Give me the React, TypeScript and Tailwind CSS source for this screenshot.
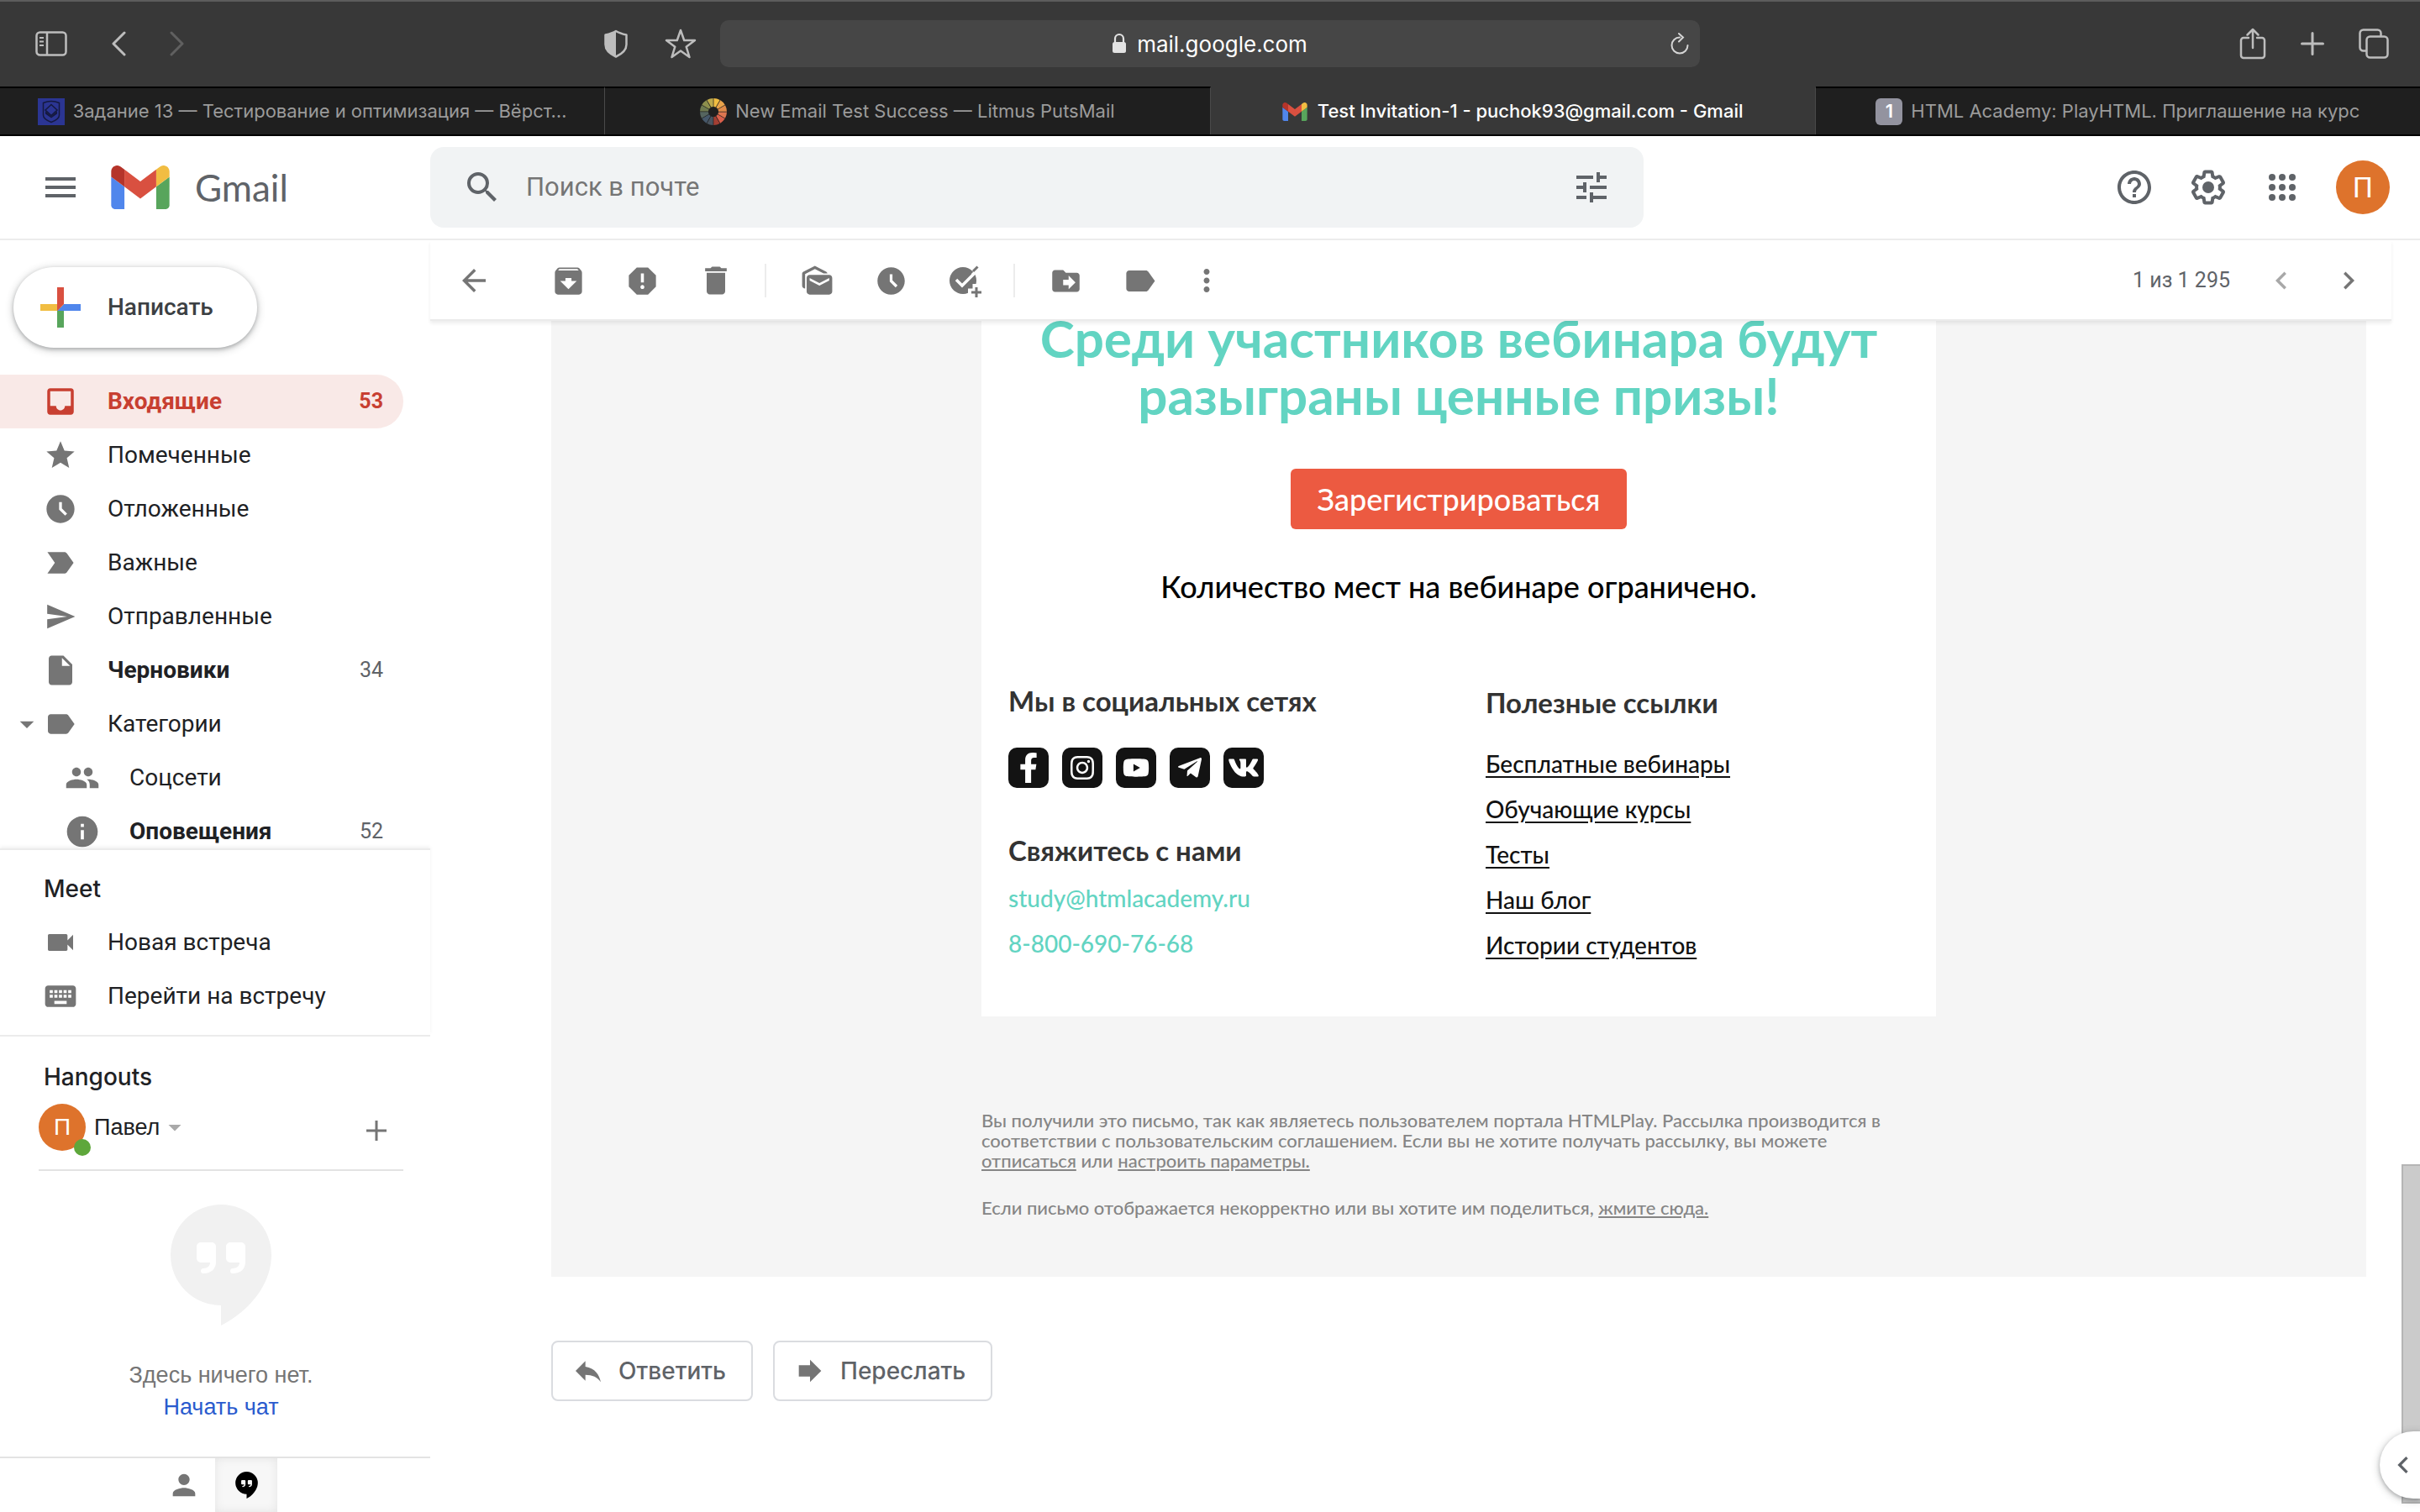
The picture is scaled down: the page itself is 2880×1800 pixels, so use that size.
import type { ReactNode } from "react";
import type { IconType } from "react-icons";
import {
  MdAccessTimeFilled,
  MdArchive,
  MdArrowBack,
  MdArrowDropDown,
  MdChevronLeft,
  MdChevronRight,
  MdDelete,
  MdDriveFileMove,
  MdForward,
  MdHelpOutline,
  MdInbox,
  MdInfo,
  MdInsertDriveFile,
  MdKeyboard,
  MdLabel,
  MdLabelImportant,
  MdMarkAsUnread,
  MdMenu,
  MdMoreVert,
  MdPeople,
  MdPerson,
  MdReply,
  MdReport,
  MdSearch,
  MdSend,
  MdStar,
  MdTune,
  MdVideocam,
} from "react-icons/md";
import { FaFacebookF, FaInstagram, FaTelegramPlane, FaVk, FaYoutube } from "react-icons/fa";

function GmailLogo({ className }: { className: string }) {
  return (
    <svg viewBox="52 42 88 66" className={className} aria-hidden="true">
      <path fill="#5086ec" d="M58 108h14V74L52 59v43c0 3.32 2.69 6 6 6" />
      <path fill="#58a55c" d="M120 108h14c3.32 0 6-2.69 6-6V59l-20 15" />
      <path fill="#f1bd42" d="M120 48v26l20-15v-8c0-7.42-8.47-11.65-14.4-7.2" />
      <path fill="#d95040" d="M72 74V48l24 18 24-18v26L96 92" />
      <path fill="#b5342a" d="M52 51v8l20 15V48l-5.6-4.2c-5.94-4.45-14.4-.22-14.4 7.2" />
    </svg>
  );
}

function AcademyIcon() {
  return (
    <svg viewBox="0 0 32 32" className="size-8 shrink-0" aria-hidden="true">
      <rect width="32" height="32" fill="#2b3593" />
      <path d="M6.500 5.500Q16 1.500 25.500 5.500V20q0 5-9.500 8.500Q6.500 25 6.500 20z" fill="none" stroke="#15193f" strokeWidth="1.500" />
      <path d="M16 7.500l7 6.500-7 6.500-7-6.500z" fill="none" stroke="#15193f" strokeWidth="1.500" />
      <path d="M9 15l7 6.500 7-6.500v3.500l-7 5-7-5z" fill="#15193f" />
    </svg>
  );
}

const wheelColors = ["#f1bd42", "#e9a34b", "#e08b4a", "#dd7650", "#d95f4b", "#a33f33", "#4a5560", "#46586a", "#55655f", "#6f7a50", "#8d8f4d", "#bda94c"];

function WheelIcon() {
  return (
    <svg viewBox="-16 -16 32 32" className="size-8 shrink-0" aria-hidden="true">
      {wheelColors.map((color, i) => (
        <path key={color} d="M0.400 -6V-16A16 16 0 0 1 7.700 -14L2.800 -5.400A6 6 0 0 0 0.400 -6z" fill={color} transform={`rotate(${i * 30})`} />
      ))}
    </svg>
  );
}

function HangoutsBubble({ className }: { className: string }) {
  return (
    <svg viewBox="0 0 120 144" className={className} aria-hidden="true">
      <path
        fillRule="evenodd"
        fill="currentColor"
        d="M60 0a60 60 0 0 1 60 60c0 36-28 68-60 84v-24A60 60 0 0 1 60 0zM36 45a5 5 0 0 0-5 5v14a5 5 0 0 0 5 5h11c0 4-3 7-8 7-2 0-3 1-3 3s1 3 3 3c9 0 15-5 15-14V50a5 5 0 0 0-5-5zM71 45a5 5 0 0 0-5 5v14a5 5 0 0 0 5 5h11c0 4-3 7-8 7-2 0-3 1-3 3s1 3 3 3c9 0 15-5 15-14V50a5 5 0 0 0-5-5z"
      />
    </svg>
  );
}

function GearIcon() {
  return (
    <svg viewBox="0 0 24 24" className="size-12" fill="currentColor" aria-hidden="true">
      <path d="M13.850 22.250h-3.700c-.74 0-1.360-.54-1.450-1.270l-.27-1.890c-.27-.14-.53-.29-.79-.46l-1.800.72c-.7.26-1.470-.03-1.810-.65L2.200 15.530c-.35-.66-.2-1.440.36-1.880l1.530-1.190c-.01-.15-.02-.3-.02-.46 0-.15.01-.31.02-.46l-1.520-1.190c-.59-.45-.74-1.260-.37-1.880l1.850-3.190c.34-.62 1.110-.9 1.790-.63l1.810.73c.26-.17.52-.32.78-.46l.27-1.910c.09-.7.71-1.250 1.440-1.250h3.700c.74 0 1.360.54 1.450 1.270l.27 1.890c.27.14.53.29.79.46l1.800-.72c.71-.26 1.480.03 1.820.65l1.840 3.180c.36.66.2 1.440-.36 1.880l-1.520 1.190c.01.15.02.3.02.46s-.01.31-.02.46l1.520 1.190c.56.45.72 1.230.37 1.860l-1.860 3.220c-.34.62-1.110.9-1.800.63l-1.800-.72c-.26.17-.52.32-.78.46l-.27 1.910c-.1.68-.72 1.220-1.460 1.220zm-3.230-2h2.760l.37-2.550.53-.22c.44-.18.88-.44 1.340-.78l.45-.34 2.380.96 1.380-2.400-2.030-1.580.07-.56c.03-.26.06-.51.06-.78s-.03-.53-.06-.78l-.07-.56 2.030-1.580-1.390-2.400-2.390.96-.45-.35c-.42-.32-.87-.58-1.330-.77l-.52-.22-.37-2.550h-2.760l-.37 2.550-.53.21c-.44.19-.88.44-1.340.79l-.45.33-2.380-.95-1.390 2.390 2.030 1.580-.07.56a7 7 0 0 0-.06.79c0 .26.02.53.06.78l.07.56-2.030 1.580 1.380 2.400 2.390-.96.45.35c.43.33.86.58 1.330.77l.53.22.38 2.550z" />
      <circle cx="12" cy="12" r="3.500" />
    </svg>
  );
}

function TaskIcon() {
  return (
    <svg viewBox="0 0 40 40" className="size-10" fill="none" aria-hidden="true">
      <circle cx="18" cy="20" r="16" fill="#757575" />
      <path d="M10 19l7 7L38 5" stroke="#fff" strokeWidth="3.500" />
      <path d="M28 12L38 2l2 2-11 11z" fill="#fff" />
      <path d="M24 34h16M34 24v16" stroke="#fff" strokeWidth="9" />
      <path d="M30 9l5.500-5.500" stroke="#757575" strokeWidth="3" />
      <path d="M28 34h12M34 28v12" stroke="#757575" strokeWidth="3" />
    </svg>
  );
}

function SafariTab({ icon, title, active = false }: { icon: ReactNode; title: string; active?: boolean }) {
  return (
    <button
      className={
        active
          ? "flex h-full min-w-0 flex-1 items-center justify-center gap-3 border-t-2 border-r border-t-[#383838] border-r-[#4a4a4a] bg-[#383838] font-medium text-white"
          : "flex h-full min-w-0 flex-1 items-center justify-center gap-2.5 border-t-2 border-r border-t-black border-r-[#4a4a4a] bg-[#1f1f1f] text-[#9b9b9b] last:border-r-0"
      }
    >
      {icon}
      <span className="truncate">{title}</span>
    </button>
  );
}

function SafariChrome() {
  return (
    <div className="shrink-0 font-[Inter,sans-serif] text-[22px] text-[#bdbdbd]">
      <div className="flex h-[103px] items-start justify-between border-t-2 border-[#5c5c5c] bg-[#383838] pt-[22px]">
        <div className="flex h-14 w-[29.75%] items-center pr-7 pl-[42px]">
          <button aria-label="Боковая панель">
            <svg viewBox="0 0 38 32" className="h-8 w-[38px]" fill="none" stroke="currentColor" aria-hidden="true">
              <rect x="1.500" y="2.500" width="35" height="27" rx="4" strokeWidth="2.500" />
              <path d="M14 3v26" strokeWidth="2.500" />
              <path d="M5 9h5M5 13.500h5M5 18h5" strokeWidth="2" />
            </svg>
          </button>
          <button aria-label="Назад" className="ml-[52px]">
            <svg viewBox="0 0 18 30" className="h-[30px] w-[18px]" fill="none" stroke="currentColor" strokeWidth="3" strokeLinecap="round" strokeLinejoin="round" aria-hidden="true">
              <path d="M16 2L3 15l13 13" />
            </svg>
          </button>
          <button aria-label="Вперёд" className="ml-[52px] text-[#606060]">
            <svg viewBox="0 0 18 30" className="h-[30px] w-[18px]" fill="none" stroke="currentColor" strokeWidth="3" strokeLinecap="round" strokeLinejoin="round" aria-hidden="true">
              <path d="M2 2l13 13L2 28" />
            </svg>
          </button>
          <button aria-label="Отчёт о конфиденциальности" className="ml-auto">
            <svg viewBox="0 0 28 34" className="h-[34px] w-7" aria-hidden="true">
              <path d="M14 2C10 4.500 6 5.500 1.500 6.500V18c0 7 6 11.500 12.500 14.500C20.500 29.500 26.500 25 26.500 18V6.500C22 5.500 18 4.500 14 2z" fill="none" stroke="currentColor" strokeWidth="2.500" strokeLinejoin="round" />
              <path d="M14 2C10 4.500 6 5.500 1.500 6.500V18c0 7 6 11.500 12.500 14.500z" fill="currentColor" />
            </svg>
          </button>
          <button aria-label="Добавить в избранное" className="ml-11">
            <svg viewBox="0 0 38 36" className="h-9 w-[38px]" fill="none" stroke="currentColor" strokeWidth="2.500" strokeLinejoin="round" aria-hidden="true">
              <path d="M19 2l4.200 12H36L25.700 21.700 29.500 34 19 26.500 8.500 34l3.800-12.300L2 14h12.800z" />
            </svg>
          </button>
        </div>
        <div className="flex h-14 w-[40.5%] items-center rounded-[10px] bg-[#464646] text-white">
          <span className="flex flex-1 items-center justify-center gap-3 pl-[35px] text-[26px]">
            <svg viewBox="0 0 18 26" className="h-[26px] w-[18px] text-[#e3e3e3]" aria-hidden="true">
              <rect x="1" y="11" width="16" height="13" rx="2.500" fill="currentColor" />
              <path d="M4 12V7a5 5 0 0 1 10 0v5" fill="none" stroke="currentColor" strokeWidth="2.200" />
            </svg>
            mail.google.com
          </span>
          <button aria-label="Обновить" className="mr-3">
            <svg viewBox="0 0 24 28" className="h-7 w-6" fill="none" stroke="#d5d5d5" strokeWidth="2" strokeLinecap="round" aria-hidden="true">
              <path d="M12 6.500a9.500 9.500 0 1 0 9.500 9.500" />
              <path d="M11 2l5 4.500-5 5" />
            </svg>
          </button>
        </div>
        <div className="flex h-14 w-[29.75%] items-center justify-end gap-10 pr-[37px]">
          <button aria-label="Поделиться">
            <svg viewBox="0 0 32 38" className="h-[38px] w-8" fill="none" stroke="currentColor" strokeWidth="2.500" strokeLinecap="round" strokeLinejoin="round" aria-hidden="true">
              <path d="M11 12H5a3 3 0 0 0-3 3v18a3 3 0 0 0 3 3h22a3 3 0 0 0 3-3V15a3 3 0 0 0-3-3h-6M16 24V2M9.500 8.500L16 2l6.500 6.500" />
            </svg>
          </button>
          <button aria-label="Новая вкладка">
            <svg viewBox="0 0 30 30" className="size-[30px]" stroke="currentColor" strokeWidth="3" strokeLinecap="round" aria-hidden="true">
              <path d="M15 2.500v25M2.500 15h25" />
            </svg>
          </button>
          <button aria-label="Обзор вкладок">
            <svg viewBox="0 0 36 36" className="size-9" fill="none" stroke="currentColor" strokeWidth="2.500" strokeLinejoin="round" aria-hidden="true">
              <rect x="9.500" y="9.500" width="25" height="25" rx="4" />
              <path d="M9 26.500H5.500a4 4 0 0 1-4-4v-17a4 4 0 0 1 4-4h17a4 4 0 0 1 4 4V9" />
            </svg>
          </button>
        </div>
      </div>
      <div className="flex h-[59px] border-b-2 border-black bg-[#383838]">
        <SafariTab icon={<AcademyIcon />} title="Задание 13 — Тестирование и оптимизация — Вёрст…" />
        <SafariTab icon={<WheelIcon />} title="New Email Test Success — Litmus PutsMail" />
        <SafariTab active icon={<GmailLogo className="h-[22px] w-[30px] shrink-0" />} title="Test Invitation-1 - puchok93@gmail.com - Gmail" />
        <SafariTab
          icon={<span className="flex size-8 shrink-0 items-center justify-center rounded-md bg-[#93939f] font-semibold text-white">1</span>}
          title="HTML Academy: PlayHTML. Приглашение на курс"
        />
      </div>
    </div>
  );
}

function GmailHeader() {
  return (
    <header className="flex h-[124px] shrink-0 items-center border-b-2 border-[#ececec] text-[#5f6368]">
      <div className="flex w-[512px] shrink-0 items-center pl-12">
        <button aria-label="Главное меню">
          <MdMenu className="size-12" />
        </button>
        <a href="#inbox" className="ml-9 flex items-center gap-[30px] font-[Lato,sans-serif] text-[44px] leading-[52px]">
          <GmailLogo className="h-[52px] w-[70px]" />
          Gmail
        </a>
      </div>
      <form className="flex h-24 max-w-[1444px] flex-1 items-center rounded-2xl bg-[#f1f3f4] pr-[38px] pl-[38px]">
        <button type="button" aria-label="Поиск">
          <MdSearch className="size-12" />
        </button>
        <input
          type="text"
          aria-label="Поиск в почте"
          placeholder="Поиск в почте"
          className="ml-7 min-w-0 flex-1 bg-transparent font-[Roboto,sans-serif] text-[31px] leading-10 outline-none placeholder:text-[#757575]"
        />
        <button type="button" aria-label="Параметры поиска">
          <MdTune className="size-12" />
        </button>
      </form>
      <div className="ml-auto flex items-center gap-10 pr-9">
        <button aria-label="Справка">
          <MdHelpOutline className="size-12" />
        </button>
        <button aria-label="Настройки">
          <GearIcon />
        </button>
        <button aria-label="Приложения Google">
          <svg viewBox="0 0 48 48" className="size-12" fill="currentColor" aria-hidden="true">
            {[12, 24, 36].flatMap((y) => [12, 24, 36].map((x) => <circle key={`${x}-${y}`} cx={x} cy={y} r="4" />))}
          </svg>
        </button>
        <button aria-label="Аккаунт" className="flex size-16 items-center justify-center rounded-full bg-[#de732c] font-[Roboto,sans-serif] text-[34px] text-white">
          П
        </button>
      </div>
    </header>
  );
}

type NavItem = { icon: IconType; size: number; label: string; count?: number; state?: "active" | "unread"; nested?: boolean; arrow?: boolean };

const navItems: NavItem[] = [
  { icon: MdInbox, size: 42, label: "Входящие", count: 53, state: "active" },
  { icon: MdStar, size: 40, label: "Помеченные" },
  { icon: MdAccessTimeFilled, size: 40, label: "Отложенные" },
  { icon: MdLabelImportant, size: 44, label: "Важные" },
  { icon: MdSend, size: 38, label: "Отправленные" },
  { icon: MdInsertDriveFile, size: 42, label: "Черновики", count: 34, state: "unread" },
  { icon: MdLabel, size: 40, label: "Категории", arrow: true },
  { icon: MdPeople, size: 42, label: "Соцсети", nested: true },
  { icon: MdInfo, size: 44, label: "Оповещения", count: 52, state: "unread", nested: true },
];

const meetItems: NavItem[] = [
  { icon: MdVideocam, size: 40, label: "Новая встреча" },
  { icon: MdKeyboard, size: 44, label: "Перейти на встречу" },
];

function NavRow({ item }: { item: NavItem }) {
  const Icon = item.icon;
  const active = item.state === "active";
  return (
    <a
      href="#folder"
      className={`relative flex h-16 shrink-0 items-center rounded-r-full pr-6 ${active ? "bg-[#f9e9e7] text-[#c83f31]" : "text-[#202124]"} ${item.nested ? "pl-[74px]" : "pl-12"}`}
    >
      {item.arrow && <MdArrowDropDown className="absolute left-3 size-10 text-[#757575]" />}
      <span className={`flex w-12 justify-center ${active ? "" : "text-[#757575]"}`}>
        <Icon size={item.size} />
      </span>
      <span className={`ml-8 flex-1 ${item.state ? "font-bold" : ""}`}>{item.label}</span>
      {item.count && <span className={`text-[25px] ${active ? "font-bold" : "text-[#5f6368]"}`}>{item.count}</span>}
    </a>
  );
}

function Sidebar() {
  return (
    <aside className="flex w-[512px] shrink-0 flex-col font-[Roboto,sans-serif] text-[28px]">
      <div className="flex min-h-0 flex-1 flex-col overflow-hidden">
        <div className="px-4 py-8">
          <button className="flex h-24 items-center rounded-full bg-white pr-[52px] pl-5 font-medium text-[#3c4043] shadow-[0_2px_4px_rgba(60,64,67,0.3),0_2px_8px_2px_rgba(60,64,67,0.2)]">
            <svg viewBox="0 0 36 36" className="size-[72px]" aria-hidden="true">
              <path fill="#58a55c" d="M16 16v14h4V20z" />
              <path fill="#5086ec" d="M30 16H20l-4 4h14z" />
              <path fill="#f1bd42" d="M6 16v4h10l4-4z" />
              <path fill="#d95040" d="M20 16V6h-4v14z" />
            </svg>
            <span className="ml-5">Написать</span>
          </button>
        </div>
        <nav className="flex flex-col pr-8" aria-label="Папки">
          {navItems.map((item) => (
            <NavRow key={item.label} item={item} />
          ))}
        </nav>
      </div>
      <section className="relative border-t-2 border-[#ececec] bg-white pt-3.5 pb-3.5 shadow-[0_-2px_4px_rgba(0,0,0,0.06)]">
        <h2 className="flex h-16 items-center pl-[52px] font-[Inter,sans-serif] font-medium text-[#202124]">Meet</h2>
        {meetItems.map((item) => (
          <NavRow key={item.label} item={item} />
        ))}
      </section>
      <section className="border-t-2 border-[#ececec] bg-white pt-4 pr-8 pl-[46px] font-['Liberation_Sans',sans-serif] text-[27px]">
        <h2 className="flex h-16 items-center pl-1.5 font-[Inter,sans-serif] text-[28px] font-medium text-[#202124]">Hangouts</h2>
        <div className="flex h-20 items-start border-b-2 border-[#e3e3e3]">
          <div className="relative flex size-14 items-center justify-center rounded-full bg-[#de732c] text-[28px] text-white">
            П
            <span className="absolute -right-1.5 -bottom-1.5 size-5 rounded-full bg-[#5ea73b]" />
          </div>
          <button className="ml-2.5 flex h-14 items-center text-[#202124]">
            Павел
            <MdArrowDropDown className="size-9 text-[#a9a9a9]" />
          </button>
          <button aria-label="Новая беседа" className="mt-5 mr-5 ml-auto">
            <svg viewBox="0 0 24 24" className="size-6" stroke="#757575" strokeWidth="3" aria-hidden="true">
              <path d="M12 0v24M0 12h24" />
            </svg>
          </button>
        </div>
        <div className="flex flex-col items-center pt-10 pb-10 leading-[38px]">
          <HangoutsBubble className="mb-10 h-36 w-[120px] text-[#f1f1f1]" />
          <p className="text-[#757575]">Здесь ничего нет.</p>
          <a href="#chat" className="text-[#2a5bce]">
            Начать чат
          </a>
        </div>
      </section>
      <div className="flex h-[66px] justify-center border-t-2 border-[#e3e3e3] bg-white">
        <button aria-label="Контакты" className="flex w-[74px] items-center justify-center text-[#757575]">
          <MdPerson className="size-10" />
        </button>
        <button aria-label="Беседы Hangouts" className="flex w-[74px] items-center justify-center bg-[#f7f7f7] shadow-[inset_0_0_12px_rgba(0,0,0,0.08)]">
          <HangoutsBubble className="h-8 w-[27px] text-black" />
        </button>
      </div>
    </aside>
  );
}

function ToolButton({ label, className = "", children }: { label: string; className?: string; children: ReactNode }) {
  return (
    <button aria-label={label} className={`flex w-[88px] items-center justify-center ${className}`}>
      {children}
    </button>
  );
}

function MailToolbar() {
  return (
    <div className="relative z-10 mr-[34px] flex h-24 shrink-0 items-center border-b-2 border-[#ebebeb] bg-white pt-0.5 pl-2 font-[Roboto,sans-serif] text-[#757575] shadow-[0_3px_4px_rgba(0,0,0,0.07)]">
      <ToolButton label="Назад к списку">
        <MdArrowBack size={42} />
      </ToolButton>
      <ToolButton label="Архивировать" className="ml-6">
        <MdArchive size={43} />
      </ToolButton>
      <ToolButton label="В спам">
        <MdReport size={43} />
      </ToolButton>
      <ToolButton label="Удалить">
        <MdDelete size={44} />
      </ToolButton>
      <span className="ml-3.5 h-10 w-0.5 bg-[#ececec]" />
      <ToolButton label="Отметить как непрочитанное" className="ml-4">
        <MdMarkAsUnread size={43} />
      </ToolButton>
      <ToolButton label="Отложить">
        <MdAccessTimeFilled size={39} />
      </ToolButton>
      <ToolButton label="Добавить в Задачи">
        <TaskIcon />
      </ToolButton>
      <span className="ml-3.5 h-10 w-0.5 bg-[#ececec]" />
      <ToolButton label="Переместить" className="ml-4">
        <MdDriveFileMove size={39} />
      </ToolButton>
      <ToolButton label="Ярлыки">
        <MdLabel size={43} />
      </ToolButton>
      <ToolButton label="Ещё" className="-ml-2">
        <MdMoreVert size={42} />
      </ToolButton>
      <span className="ml-auto text-[25px] text-[#5f6368]">1 из 1 295</span>
      <button aria-label="Новее" className="ml-10 text-[#a8a8a8]">
        <MdChevronLeft size={42} />
      </button>
      <button aria-label="Старее" className="mr-[30px] ml-[38px]">
        <MdChevronRight size={42} />
      </button>
    </div>
  );
}

const socials: { label: string; icon: IconType; size: number }[] = [
  { label: "Facebook", icon: FaFacebookF, size: 36 },
  { label: "Instagram", icon: FaInstagram, size: 32 },
  { label: "YouTube", icon: FaYoutube, size: 32 },
  { label: "Telegram", icon: FaTelegramPlane, size: 32 },
  { label: "ВКонтакте", icon: FaVk, size: 38 },
];

const usefulLinks = ["Бесплатные вебинары", "Обучающие курсы", "Тесты", "Наш блог", "Истории студентов"];

function Letter() {
  return (
    <article className="-mt-4 flex flex-col items-center bg-[#f5f5f5] pb-[70px] font-[Lato,sans-serif] text-[28px] font-medium">
      <div className="flex w-full max-w-[1136px] flex-col items-center bg-white pt-0.5 pb-[58px]">
        <h1 className="px-10 text-center text-[62px] leading-[68px] font-bold text-[#62d4c2]">Среди участников вебинара будут разыграны ценные призы!</h1>
        <a href="#register" className="mt-[54px] flex h-[72px] w-[400px] items-center justify-center rounded-md bg-[#ec5a41] text-4xl text-white">
          Зарегистрироваться
        </a>
        <p className="mt-[46px] text-4xl leading-[44px] text-black">Количество мест на вебинаре ограничено.</p>
        <div className="mt-[94px] grid w-full grid-cols-2">
          <div className="pl-8">
            <h2 className="text-[33px] leading-10 font-bold text-[#333]">Мы в социальных сетях</h2>
            <ul className="mt-9 flex gap-4">
              {socials.map(({ label, icon: Icon, size }) => (
                <li key={label}>
                  <a href="#social" aria-label={label} className="flex size-12 items-center justify-center rounded-[10px] bg-[#131313] text-white">
                    <Icon size={size} />
                  </a>
                </li>
              ))}
            </ul>
            <h2 className="mt-[54px] text-[33px] leading-10 font-bold text-[#333]">Свяжитесь с нами</h2>
            <address className="mt-2.5 flex flex-col items-start leading-[54px] text-[#62d4c2] not-italic">
              <a href="mailto:study@htmlacademy.ru">study@htmlacademy.ru</a>
              <a href="tel:88006907668">8-800-690-76-68</a>
            </address>
          </div>
          <div className="pt-0.5 pl-8">
            <h2 className="text-[33px] leading-10 font-bold text-[#333]">Полезные ссылки</h2>
            <ul className="mt-[26px] leading-[54px] text-[#111]">
              {usefulLinks.map((link) => (
                <li key={link}>
                  <a href="#link" className="underline underline-offset-4">
                    {link}
                  </a>
                </li>
              ))}
            </ul>
          </div>
        </div>
      </div>
      <footer className="flex w-full max-w-[1136px] flex-col gap-8 pt-28 pr-10 text-[22px] leading-6 text-[#858585]">
        <p>
          Вы получили это письмо, так как являетесь пользователем портала HTMLPlay. Рассылка производится в соответствии с пользовательским соглашением. Если вы не
          хотите получать рассылку, вы можете{" "}
          <a href="#unsubscribe" className="underline underline-offset-2">
            отписаться
          </a>{" "}
          или{" "}
          <a href="#settings" className="underline underline-offset-2">
            настроить параметры.
          </a>
        </p>
        <p>
          Если письмо отображается некорректно или вы хотите им поделиться,{" "}
          <a href="#web" className="underline underline-offset-2">
            жмите сюда.
          </a>
        </p>
      </footer>
    </article>
  );
}

export default function App() {
  return (
    <div className="flex h-screen flex-col overflow-hidden bg-white">
      <SafariChrome />
      <GmailHeader />
      <div className="flex min-h-0 flex-1">
        <Sidebar />
        <main className="relative flex min-w-0 flex-1 flex-col">
          <MailToolbar />
          <div className="pr-16 pl-36">
            <Letter />
            <div className="mt-[76px] flex gap-6 font-[Inter,sans-serif] text-[28px] font-medium text-[#5f6368]">
              <button className="flex h-[72px] items-center gap-4 rounded-lg border-2 border-[#dadce0] pr-[30px] pl-[22px]">
                <MdReply className="size-10 text-[#757575]" />
                Ответить
              </button>
              <button className="flex h-[72px] items-center gap-4 rounded-lg border-2 border-[#dadce0] pr-[30px] pl-[22px]">
                <MdForward className="size-10 text-[#757575]" />
                Переслать
              </button>
            </div>
          </div>
          <div className="absolute right-0 bottom-2.5 h-[404px] w-[22px] border-2 border-r-0 border-[#b5b5b5] bg-[#cbcbcb]" />
          <button
            aria-label="Показать боковую панель"
            className="absolute right-0 bottom-4 flex h-20 w-12 items-center rounded-l-full bg-white pl-2 text-[#5f6368] shadow-[0_2px_4px_rgba(60,64,67,0.3),0_2px_8px_2px_rgba(60,64,67,0.2)]"
          >
            <MdChevronLeft size={40} />
          </button>
        </main>
      </div>
    </div>
  );
}
